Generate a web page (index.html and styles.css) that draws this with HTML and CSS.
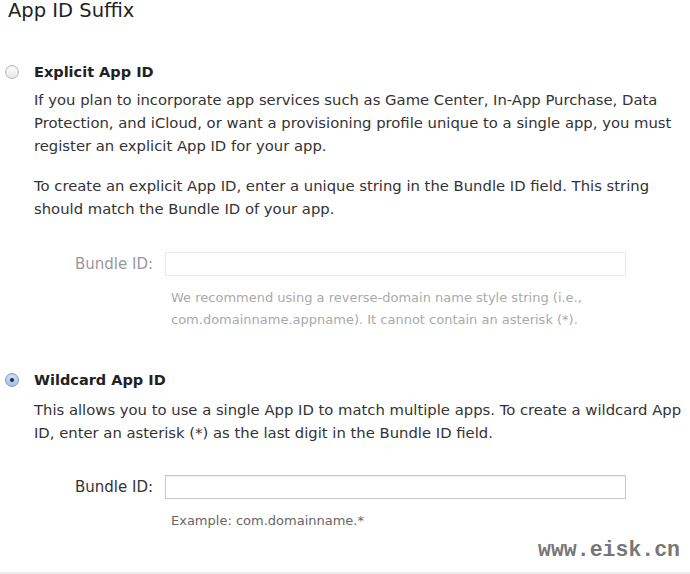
FILE: index.html
```html
<!DOCTYPE html>
<html>
<head>
<meta charset="utf-8">
<link rel="stylesheet" href="styles.css">
</head>
<body>
<div class="page">
  <h2 class="title">App ID Suffix</h2>

  <section class="option option-1">
    <div class="option-head">
      <span class="radio"></span>
      <span class="option-label">Explicit App ID</span>
    </div>
    <div class="option-body">
      <p class="desc">If you plan to incorporate app services such as Game Center, In-App Purchase, Data<br>Protection, and iCloud, or want a provisioning profile unique to a single app, you must<br>register an explicit App ID for your app.</p>
      <p class="desc">To create an explicit App ID, enter a unique string in the Bundle ID field. This string<br>should match the Bundle ID of your app.</p>
    </div>
    <div class="field disabled">
      <label class="field-label">Bundle ID:</label>
      <div class="field-main">
        <div class="input"></div>
        <p class="hint">We recommend using a reverse-domain name style string (i.e.,<br>com.domainname.appname). It cannot contain an asterisk (*).</p>
      </div>
    </div>
  </section>

  <section class="option option-2">
    <div class="option-head">
      <span class="radio checked"></span>
      <span class="option-label">Wildcard App ID</span>
    </div>
    <div class="option-body">
      <p class="desc">This allows you to use a single App ID to match multiple apps. To create a wildcard App<br>ID, enter an asterisk (*) as the last digit in the Bundle ID field.</p>
    </div>
    <div class="field">
      <label class="field-label">Bundle ID:</label>
      <div class="field-main">
        <div class="input"></div>
        <p class="hint">Example: com.domainname.*</p>
      </div>
    </div>
  </section>

  <div class="footer">
    <span class="watermark">www.eisk.cn</span>
  </div>
</div>
</body>
</html>
```

FILE: styles.css
```css
html, body {
  margin: 0;
  padding: 0;
  background: #fff;
}
body {
  font-family: "DejaVu Sans", "Open Sans", sans-serif;
  color: #333;
  width: 690px;
  height: 574px;
  overflow: hidden;
}
.title {
  margin: 0;
  padding: 0 0 0 8px;
  height: 22px;
  font-size: 19.5px;
  font-weight: normal;
  line-height: 22px;
  color: #222;
}
.option-1 {
  margin-top: 40px;
}
.option-2 {
  margin-top: 39px;
}
.option-head {
  display: flex;
  align-items: center;
  height: 20px;
}
.radio {
  box-sizing: border-box;
  width: 14px;
  height: 14px;
  border-radius: 50%;
  margin-left: 5px;
  border: 1px solid #b8b8b8;
  background: linear-gradient(#fff, #e6e6e6);
  box-shadow: inset 0 1px 1px rgba(0,0,0,0.08);
  position: relative;
}
.radio.checked {
  border-color: #7b9cc4;
  background: linear-gradient(#d4e4f7, #9fc1e8);
}
.radio.checked::after {
  content: "";
  position: absolute;
  left: 4px;
  top: 4px;
  width: 4px;
  height: 4px;
  border-radius: 50%;
  background: #1d2d44;
}
.option-label {
  margin-left: 15px;
  font-weight: bold;
  font-size: 14.5px;
  color: #222;
}
.option-body {
  padding-left: 34px;
  margin-top: 6px;
}
.option-2 .option-body {
  margin-top: 8px;
}
.desc {
  margin: 0 0 17px 0;
  font-size: 14.8px;
  line-height: 23px;
  color: #333;
  white-space: nowrap;
}
.field {
  display: flex;
  margin-top: 32px;
}
.option-2 .field {
  margin-top: 31px;
}
.field-label {
  box-sizing: border-box;
  width: 165px;
  padding-right: 12px;
  text-align: right;
  font-size: 15px;
  line-height: 24px;
  color: #333;
}
.field-main {
  width: 461px;
}
.input {
  height: 24px;
  box-sizing: border-box;
  border: 1px solid #c8c8c8;
  background: #fff;
  box-shadow: inset 0 1px 1px rgba(0,0,0,0.06);
}
.hint {
  margin: 11px 0 0 6px;
  font-size: 13px;
  line-height: 22px;
  color: #666;
  white-space: nowrap;
}
.disabled .field-label { color: #999; }
.disabled .input { border-color: #eaeaea; box-shadow: none; }
.disabled .hint { color: #aaa; }
.footer {
  margin-top: 2px;
  border-bottom: 2px solid #eee;
  height: 38px;
  display: flex;
  justify-content: flex-end;
  align-items: flex-end;
  padding-right: 10px;
}
.watermark {
  font-family: "Liberation Mono", "DejaVu Sans Mono", monospace;
  font-weight: bold;
  font-size: 21.5px;
  color: #777;
  line-height: 22px;
  margin-bottom: 11px;
}
```
